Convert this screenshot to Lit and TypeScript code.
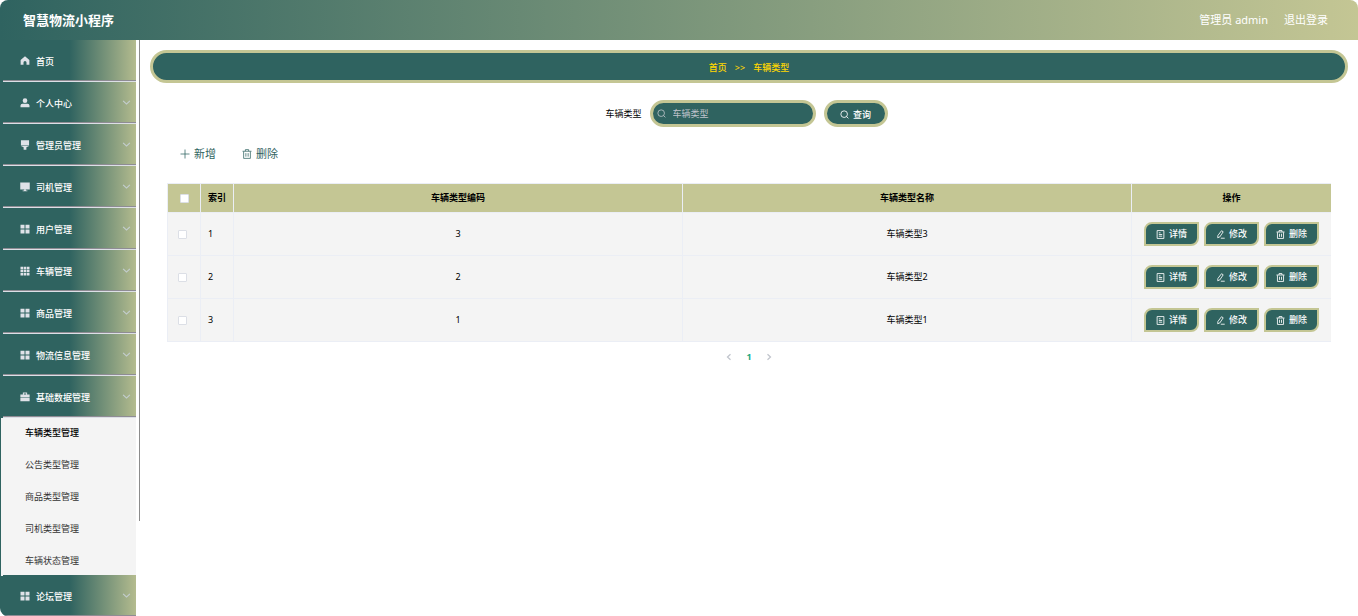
import { LitElement, html, css, svg, nothing } from "lit";
import { customElement, state } from "lit/decorators.js";
import { classMap } from "lit/directives/class-map.js";

const filled: Record<string, unknown> = {
  home: svg`<path d="M8 .5 1 6.200V14h4.600v-3.600a2.400 2.400 0 0 1 4.800 0V14H15V6.200z"/>`,
  user: svg`<circle cx="8" cy="4.200" r="3.700"/><path d="M.8 14.800V12a3 3 0 0 1 3-2.800h8.400a3 3 0 0 1 3 2.800v2.800z"/>`,
  brush: svg`<path d="M1.500.5h13v7.400h-13z"/><path d="M1.500 8.800h13v.9L10.200 11.500v4H5.800v-4L1.500 9.700z"/>`,
  monitor: svg`<path d="M.4.600h15.200v11.200H.4z"/><path d="M6.500 11.600h3V13.400h2.300v1.500H4.200v-1.500h2.300z"/>`,
  grid: svg`<path d="M.8 1h6.400v6.200H.8zM8.800 1h6.400v6.200H8.800zM.8 8.800h6.400V15H.8zM8.800 8.800h6.400V15H8.800z"/>`,
  tiles: svg`<path d="M.8 1h4.200v4H.8zM5.900 1h4.200v4H5.900zM11 1h4.200v4H11zM.8 6h4.200v4H.8zM5.900 6h4.200v4H5.900zM11 6h4.200v4H11zM.8 11h4.200v4H.8zM5.900 11h4.200v4H5.900zM11 11h4.200v4H11z"/>`,
  briefcase: svg`<path d="M4.600 3.800V.8h6.800v3h4v4.800H.6V3.800zM6.200 3.800h3.600V2.200H6.200zM.6 9.400h14.800v5.400H.6z" fill-rule="evenodd"/>`,
};

const lined: Record<string, unknown> = {
  down: svg`<path d="m2 5 6 5.800L14 5"/>`,
  left: svg`<path d="m11 2.500-6 5.500 6 5.500"/>`,
  right: svg`<path d="m5 2.500 6 5.500-6 5.500"/>`,
  plus: svg`<path d="M8 .8v14.400M.8 8h14.400"/>`,
  search: svg`<circle cx="7.400" cy="7.400" r="5.900"/><path d="m11.500 11.500 3.400 3.400"/>`,
  trash: svg`<path d="M.8 3.600h14.400M5.400 3.500V1h5.200v2.500M2.600 4v11h10.800V4M6.200 6.600v5.600M9.800 6.600v5.600"/>`,
  doc: svg`<path d="M2 1h12v14H2zM5 5h3M5 8h6M5 11h6"/>`,
  edit: svg`<path d="M9.800 1.300 12.800 3.200 6.800 12.300l-3.800 1.500.4-4.100zM8.500 14.600h7"/>`,
};

const icon = (name: string) =>
  filled[name]
    ? html`<svg class="icon solid" viewBox="0 0 16 16" aria-hidden="true">${filled[name]}</svg>`
    : html`<svg class="icon" viewBox="0 0 16 16" aria-hidden="true">${lined[name]}</svg>`;

const iconStyles = css`
  .icon {
    width: 9px;
    height: 9px;
    flex: none;
    fill: none;
    stroke: currentColor;
    stroke-width: 1.5;
  }
  .solid {
    fill: currentColor;
    stroke: none;
  }
  a {
    color: inherit;
    text-decoration: none;
  }
  button,
  input {
    font: inherit;
  }
  button {
    cursor: pointer;
  }
`;

interface MenuEntry {
  label: string;
  icon: string;
  children?: string[];
  leaf?: boolean;
}

const MENU: MenuEntry[] = [
  { label: "首页", icon: "home", leaf: true },
  { label: "个人中心", icon: "user" },
  { label: "管理员管理", icon: "brush" },
  { label: "司机管理", icon: "monitor" },
  { label: "用户管理", icon: "grid" },
  { label: "车辆管理", icon: "tiles" },
  { label: "商品管理", icon: "grid" },
  { label: "物流信息管理", icon: "grid" },
  {
    label: "基础数据管理",
    icon: "briefcase",
    children: ["车辆类型管理", "公告类型管理", "商品类型管理", "司机类型管理", "车辆状态管理"],
  },
  { label: "论坛管理", icon: "grid" },
];

@customElement("side-menu")
export class SideMenu extends LitElement {
  @state() private opened = "基础数据管理";
  @state() private current = "车辆类型管理";

  static styles = [
    iconStyles,
    css`
      :host {
        display: flex;
        width: 140px;
        flex: none;
        overflow: hidden;
      }
      .menu {
        flex: 1;
        padding-left: 3px;
        background: var(--deep);
        border-bottom-left-radius: 8px;
        overflow: hidden;
      }
      .track {
        width: 4px;
        display: flex;
        justify-content: flex-end;
      }
      .thumb {
        width: 1px;
        height: 83.5%;
        background: #8c8c8c;
      }
      .entry {
        display: flex;
        align-items: center;
        box-sizing: border-box;
        width: 100%;
        height: 42px;
        padding: 0 5px 0 17px;
        border: 0;
        border-bottom: 1px solid #dcdfe6;
        background: linear-gradient(90deg, var(--deep) 50%, var(--sand) 106%);
        box-shadow: inset 0 -1px #8f8c94;
        color: #fff;
        font-weight: 500;
        text-align: left;
      }
      .entry .solid {
        color: #dfe2e8;
        width: 10px;
        height: 10px;
        margin-right: 6px;
      }
      .name {
        flex: 1;
        padding-top: 2px;
      }
      .entry .icon:last-child {
        width: 9px;
        height: 9px;
        color: #c4ced0;
        stroke-width: 2;
      }
      .sub {
        display: grid;
        gap: 2px;
        margin: 0 0 -1px -2px;
        background: #f4f4f4;
      }
      .link {
        padding-left: 24px;
        line-height: 30px;
        color: #333;
      }
      .active {
        color: #000;
        font-weight: 500;
      }
    `,
  ];

  render() {
    return html`
      <nav class="menu">
        ${MENU.map(
          (m) => html`
            <button class="entry" @click=${() => (this.opened = this.opened === m.label ? "" : m.label)}>
              ${icon(m.icon)}<span class="name">${m.label}</span>${m.leaf ? nothing : icon("down")}
            </button>
            ${m.children && this.opened === m.label
              ? html`<div class="sub">
                  ${m.children.map(
                    (c) => html`<a
                      href="#"
                      class=${classMap({ link: true, active: c === this.current })}
                      @click=${() => (this.current = c)}
                      >${c}</a
                    >`
                  )}
                </div>`
              : nothing}
          `
        )}
      </nav>
      <div class="track"><div class="thumb"></div></div>
    `;
  }
}

const ROWS = [
  { index: 1, code: "3", name: "车辆类型3" },
  { index: 2, code: "2", name: "车辆类型2" },
  { index: 3, code: "1", name: "车辆类型1" },
];

@customElement("type-list")
export class TypeList extends LitElement {
  static styles = [
    iconStyles,
    css`
      :host {
        display: block;
        flex: 1;
        min-width: 0;
        padding: 10px;
      }
      .crumbs {
        display: flex;
        justify-content: center;
        gap: 8px;
        padding: 4px 0 2px;
        border: 3px solid var(--sand);
        border-radius: 20px;
        background: var(--deep);
        color: #ffd700;
        font-weight: 500;
        line-height: 21px;
      }
      .search {
        display: flex;
        justify-content: center;
        align-items: center;
        gap: 8px;
        margin-top: 17px;
        padding-right: 5px;
      }
      .field,
      .query {
        display: flex;
        align-items: center;
        box-sizing: border-box;
        height: 27px;
        border: 3px solid var(--sand);
        border-radius: 14px;
        background: var(--deep);
      }
      .field {
        width: 166px;
        padding: 0 4px;
        gap: 7px;
        color: #b9c3c6;
      }
      .field input {
        flex: 1;
        min-width: 0;
        padding: 0;
        border: 0;
        outline: 0;
        background: none;
        color: #fff;
      }
      .field input::placeholder {
        color: #c0c4cc;
      }
      .query {
        justify-content: center;
        gap: 4px;
        width: 64px;
        padding: 2px 0 0;
        color: #fff;
        font-weight: 500;
      }
      .content {
        padding: 0 17px;
      }
      .tools {
        display: flex;
        gap: 26px;
        padding: 17px 13px 19px;
      }
      .tool {
        display: flex;
        align-items: center;
        gap: 4px;
        height: 20px;
        padding: 0;
        border: 0;
        background: none;
        color: var(--deep);
        font-size: 11px;
      }
      .tool .icon {
        width: 10px;
        height: 10px;
        stroke-width: 1.2;
      }
      .grid {
        width: 100%;
        table-layout: fixed;
        border-spacing: 0;
        border: solid #ebeef5;
        border-width: 1px 0 0 1px;
        color: #000;
      }
      .grid th,
      .grid td {
        padding: 0;
        border: solid #ebeef5;
        border-width: 0 1px 1px 0;
        text-align: center;
      }
      .grid th {
        height: 28px;
        background: var(--sand);
        font-weight: 700;
      }
      .grid td {
        height: 42px;
        background: #f4f4f4;
      }
      .grid tr > :last-child {
        border-right: 0;
      }
      .grid .index {
        padding-left: 7px;
        text-align: left;
      }
      .grid td.pick {
        padding-right: 3px;
      }
      .narrow {
        width: 33px;
      }
      .wide {
        width: 199px;
      }
      .tick {
        appearance: none;
        display: block;
        box-sizing: border-box;
        width: 9px;
        height: 9px;
        margin: 0 auto;
        border: 1px solid #dcdfe6;
        border-radius: 1px;
        background: #fff;
      }
      .tick:checked {
        background: var(--deep);
      }
      .actions {
        display: flex;
        justify-content: center;
        gap: 5px;
      }
      .act {
        display: flex;
        align-items: center;
        justify-content: center;
        gap: 4px;
        box-sizing: border-box;
        width: 55px;
        height: 24px;
        padding: 0;
        border: 2px solid var(--sand);
        border-radius: 8px 0;
        background: var(--deep);
        color: #fff;
        font-weight: 500;
      }
      .pages {
        display: flex;
        justify-content: center;
        align-items: center;
        margin-top: 5px;
      }
      .page {
        display: flex;
        justify-content: center;
        align-items: center;
        width: 20px;
        height: 20px;
        padding: 0;
        border: 0;
        background: none;
        color: #c0c4cc;
      }
      .page .icon {
        width: 8px;
        height: 8px;
        stroke-width: 2.5;
      }
      .on {
        color: #18a880;
        font-weight: 700;
      }
    `,
  ];

  render() {
    return html`
      <nav class="crumbs"><a href="#">首页</a><span>&gt;&gt;</span><span>车辆类型</span></nav>
      <form class="search" @submit=${(e: Event) => e.preventDefault()}>
        <label for="type">车辆类型</label>
        <div class="field">${icon("search")}<input id="type" type="text" placeholder="车辆类型" /></div>
        <button class="query">${icon("search")}查询</button>
      </form>
      <div class="content">
        <div class="tools">
          <button class="tool">${icon("plus")}新增</button>
          <button class="tool">${icon("trash")}删除</button>
        </div>
        <table class="grid">
          <colgroup>
            <col class="narrow" />
            <col class="narrow" />
            <col />
            <col />
            <col class="wide" />
          </colgroup>
          <thead>
            <tr>
              <th><input class="tick" type="checkbox" aria-label="全选" /></th>
              <th class="index">索引</th>
              <th>车辆类型编码</th>
              <th>车辆类型名称</th>
              <th>操作</th>
            </tr>
          </thead>
          <tbody>
            ${ROWS.map(
              (r) => html`<tr>
                <td class="pick"><input class="tick" type="checkbox" aria-label=${r.name} /></td>
                <td class="index">${r.index}</td>
                <td>${r.code}</td>
                <td>${r.name}</td>
                <td>
                  <div class="actions">
                    <button class="act">${icon("doc")}详情</button>
                    <button class="act">${icon("edit")}修改</button>
                    <button class="act">${icon("trash")}删除</button>
                  </div>
                </td>
              </tr>`
            )}
          </tbody>
        </table>
        <div class="pages">
          <button class="page" aria-label="上一页">${icon("left")}</button>
          <button class="page on">1</button>
          <button class="page" aria-label="下一页">${icon("right")}</button>
        </div>
      </div>
    `;
  }
}

@customElement("app-root")
export class AppRoot extends LitElement {
  static styles = [
    iconStyles,
    css`
      :host {
        --deep: #2f6360;
        --sand: #c4c694;
        display: flex;
        flex-direction: column;
        height: 100vh;
        background: #fff;
        font-family: "Noto Sans", "Noto Sans CJK SC", sans-serif;
        font-size: 9px;
        line-height: 14px;
        color: #000;
      }
      .top {
        display: flex;
        align-items: center;
        flex: none;
        gap: 16px;
        height: 40px;
        padding: 0 30px 0 23px;
        box-sizing: border-box;
        border-radius: 8px 8px 0 0;
        background: linear-gradient(90deg, var(--deep), var(--sand));
        color: #fff;
        font-size: 11px;
      }
      .title {
        flex: 1;
        margin: 0;
        font-size: 13px;
        font-weight: 700;
      }
      .body {
        display: flex;
        flex: 1;
        min-height: 0;
      }
    `,
  ];

  render() {
    return html`
      <header class="top">
        <h1 class="title">智慧物流小程序</h1>
        <span>管理员 admin</span>
        <a href="#">退出登录</a>
      </header>
      <div class="body">
        <side-menu></side-menu>
        <type-list></type-list>
      </div>
    `;
  }
}
